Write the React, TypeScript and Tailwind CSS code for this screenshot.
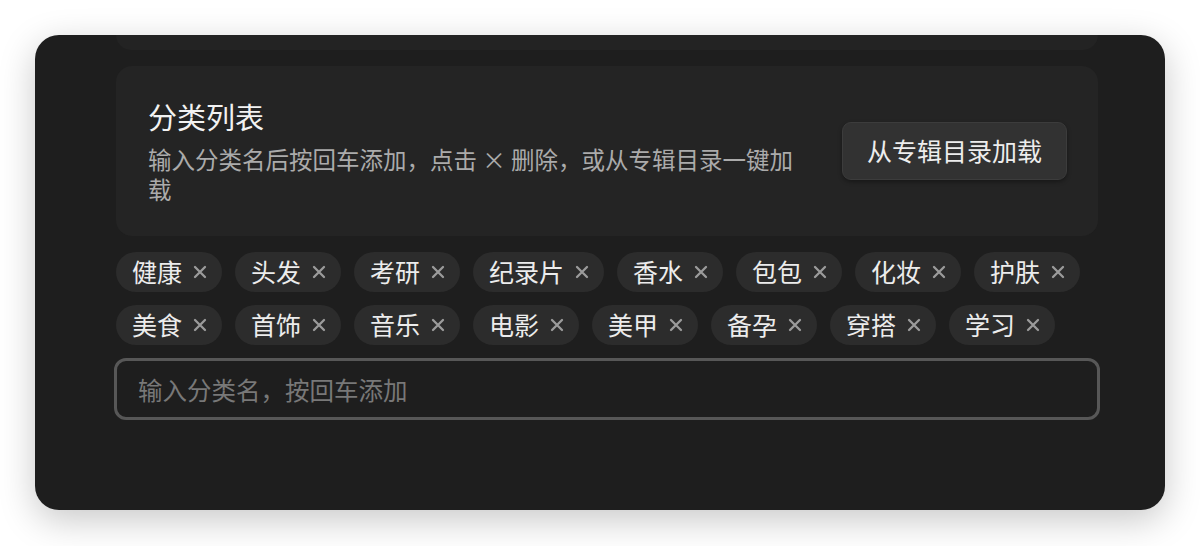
const tags = [
  "健康",
  "头发",
  "考研",
  "纪录片",
  "香水",
  "包包",
  "化妆",
  "护肤",
  "美食",
  "首饰",
  "音乐",
  "电影",
  "美甲",
  "备孕",
  "穿搭",
  "学习",
];

function CloseMark() {
  return (
    <svg width="14" height="14" viewBox="0 0 14 14" className="shrink-0">
      <path d="M2 2 L12 12 M12 2 L2 12" stroke="#9b9b9b" strokeWidth="2.3" strokeLinecap="round" />
    </svg>
  );
}

export default function App() {
  return (
    <div
      className="min-h-screen bg-white p-[35px]"
      style={{ fontFamily: '"Noto Sans CJK SC", "Noto Sans", sans-serif' }}
    >
      <div className="h-[475px] overflow-hidden rounded-[24px] bg-[#1e1e1e] pl-[81px] pr-[67px] shadow-[0_10px_36px_rgba(0,0,0,0.22)]">
        {/* bottom edge of the section above, scrolled out of view */}
        <div className="h-[15px] rounded-b-[16px] bg-[#232323]" />

        <div className="mt-4 flex items-center gap-12 rounded-[16px] bg-[#242424] py-8 pl-8 pr-[31px]">
          <div className="flex-1">
            <h2 className="text-[29px] leading-[36px] font-normal text-[#f2f2f2]">分类列表</h2>
            <p className="mt-[10px] text-[23.5px] leading-[30px] text-[#ababab]">
              输入分类名后按回车添加，点击 × 删除，或从专辑目录一键加载
            </p>
          </div>
          <button className="h-[58px] w-[225px] shrink-0 rounded-[9px] border border-[#3c3c3c] bg-[#323232] text-[25px] text-[#ededed] shadow-[0_2px_4px_rgba(0,0,0,0.35)]">
            从专辑目录加载
          </button>
        </div>

        <div className="mt-4 flex flex-wrap gap-[13px]">
          {tags.map((t) => (
            <span
              key={t}
              className="inline-flex h-10 items-center gap-[11px] rounded-full bg-[#2c2c2c] pl-[16px] pr-[15px] text-[25px] text-[#ececec]"
            >
              {t}
              <CloseMark />
            </span>
          ))}
        </div>

        <input
          className="-mx-[2px] mt-[13px] h-[62px] w-[calc(100%+4px)] rounded-[12px] border-[3px] border-[#575757] bg-[#1e1e1e] pl-[21px] text-[24.5px] text-[#e6e6e6] outline-none placeholder:text-[#787878]"
          placeholder="输入分类名，按回车添加"
        />
      </div>
    </div>
  );
}
